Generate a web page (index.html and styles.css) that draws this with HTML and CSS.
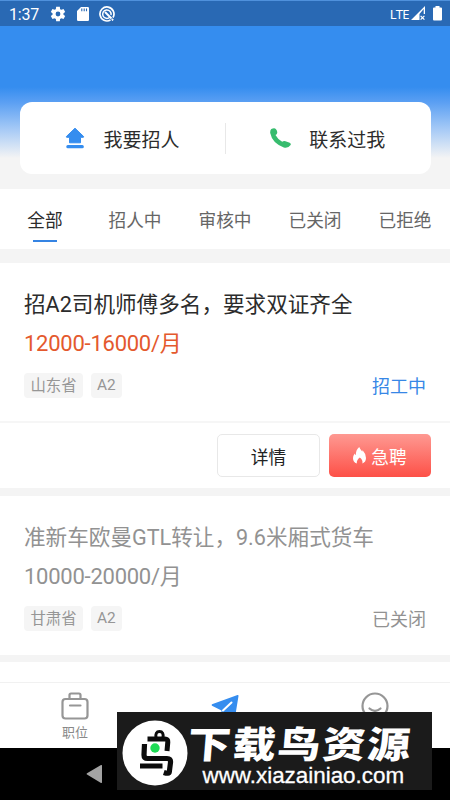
FILE: index.html
```html
<!DOCTYPE html>
<html lang="zh-CN">
<head>
<meta charset="utf-8">
<title>职位管理</title>
<link rel="stylesheet" href="styles.css">
</head>
<body>
<div class="screen">
  <header class="status">
    <span class="clock">1:37</span>
    <svg class="gear" width="16" height="16" viewBox="1 1 22 22"><path fill="#fff" fill-rule="evenodd" d="M19.500 13a8 8 0 0 0 0-2l2.400-1.900-2.300-4-2.900 1.200a8 8 0 0 0-1.800-1L14.500 2h-5L9 5.300a8 8 0 0 0-1.800 1L4.400 5.100l-2.300 4L4.500 11a8 8 0 0 0 0 2l-2.400 1.900 2.300 4 2.800-1.200a8 8 0 0 0 1.800 1l.5 3.300h5l.4-3.300a8 8 0 0 0 1.800-1l2.900 1.200 2.300-4zM12 15.300a3.300 3.300 0 1 1 0-6.600 3.300 3.300 0 0 1 0 6.600z"/></svg>
    <svg class="sd" width="12" height="14" viewBox="0 0 12 14"><path fill="#fff" d="M4 0h6.500A1.300 1.300 0 0 1 12 1.300v11.400a1.300 1.300 0 0 1-1.500 1.300H1.500A1.300 1.300 0 0 1 0 12.700V4z"/><path stroke="#2969b4" stroke-width="1.100" d="M4.800 1.500v2.700M7.200 1.500v2.700M9.500 1.500v2.700"/></svg>
    <svg class="q" width="16" height="16" viewBox="0 0 16 16" fill="none" stroke="#fff"><path stroke-width="1.700" d="M11.500 14A7 7 0 1 1 14 11.500"/><path stroke-width="1.500" d="M10.800 11.200A4.200 4.200 0 1 1 12 9"/><path stroke-width="1.900" d="M6 6l6.500 6.500"/><circle cx="13.500" cy="13.700" r=".7" fill="#fff"/></svg>
    <span class="lte">LTE</span>
    <svg class="signal" width="15" height="15" viewBox="0 0 15 15"><path fill="#fff" fill-rule="evenodd" d="M0 14L14 0v8h-1.300V3L8.500 8V14z"/><path stroke="#fff" stroke-width="1.200" d="M9.600 9.800l3.800 3.800m0-3.800l-3.800 3.800"/></svg>
    <svg class="battery" width="9" height="15" viewBox="0 0 9 15"><path fill="#fff" d="M2.500 1.500V0h4v1.500H8a1 1 0 0 1 1 1V13.500a1 1 0 0 1-1 1H1a1 1 0 0 1-1-1v-11a1 1 0 0 1 1-1z"/></svg>
  </header>
  <section class="hero">
    <div class="actions">
      <div class="action">
        <svg width="20" height="22" viewBox="0 0 20 22"><path fill="#358def" stroke="#358def" stroke-linejoin="round" d="M10 1.200L18.600 9.500q.5.700-.4.800H15.500v5.500H4.500v-5.500H1.800q-.9-.1-.4-.8z"/><rect x="1.300" y="18" width="17.500" height="3.300" rx="1.500" fill="#358def"/></svg>
        <span>我要招人</span>
      </div>
      <div class="action contact">
        <svg width="21" height="20" viewBox="0 0 21 20"><path fill="#37bc6e" d="M1.300 1.100Q4.500-.8 6 1.200q1.500 2 1.200 3.700-.2 1.300-1.700 2.200 2 4 6.700 6.700 1.500-1.300 3.300-.6l4.200 1.500q1.600.8.900 2.200Q18 20.600 13.800 19.400 2.300 15.300.2 5 0 2.400 1.300 1.100z"/></svg>
        <span>联系过我</span>
      </div>
    </div>
  </section>
  <nav class="tabs">
    <a class="active">全部</a><a>招人中</a><a>审核中</a><a>已关闭</a><a>已拒绝</a>
  </nav>
  <main>
    <article class="job">
      <h2>招A2司机师傅多名，要求双证齐全</h2>
      <p class="pay">12000-16000/月</p>
      <div class="meta"><span class="tag">山东省</span><span class="tag small">A2</span><span class="state">招工中</span></div>
      <footer class="buttons">
        <button class="detail">详情</button>
        <button class="urgent"><svg width="13" height="17" viewBox="0 0 13 17"><path fill="#fff" d="M6.200 0q.9 2.200 3 4.600.5-.7.300-1.500Q13 7 13 11q0 4-3.600 5.500.7-3.500-2.600-6-3.300 2.500-3 6Q0 15 0 11.200q0-2.500 1.700-4.800.3 1.200 1.200 1.700Q2.600 3 6.200 0z"/></svg>急聘</button>
      </footer>
    </article>
    <article class="job closed">
      <h2>准新车欧曼GTL转让，9.6米厢式货车</h2>
      <p class="pay">10000-20000/月</p>
      <div class="meta"><span class="tag">甘肃省</span><span class="tag small">A2</span><span class="state">已关闭</span></div>
    </article>
  </main>
  <nav class="bottom">
    <a><svg width="28" height="28" viewBox="0 0 28 28" fill="none" stroke="#969696" stroke-width="2.200"><rect x="1.500" y="7" width="25" height="19.500" rx="3"/><path d="M8.500 7V3q0-1.500 1.500-1.500h8q1.500 0 1.500 1.500v4M9 13.500h10.500" stroke-linecap="round"/></svg><span>职位</span></a>
    <a><svg width="28" height="28" viewBox="0 0 28 28"><path fill="#358def" d="M1 12.200L26.500 3q1.200-.2 1 1L24 25.500l-9.500-5.500-4 5v-6.500L1 13.800q-.8-.7 0-1.600z"/><path stroke="#fff" stroke-width="2" stroke-linecap="round" d="M12 18.500L20.500 10.500"/></svg><span>管理</span></a>
    <a><svg width="28" height="28" viewBox="0 0 28 28" fill="none" stroke="#969696" stroke-width="2.200"><circle cx="14" cy="14" r="12.500"/><path stroke-linecap="round" d="M8.500 16.500q5.500 5 11 0"/></svg><span>我的</span></a>
  </nav>
  <footer class="system"><svg width="17" height="20" viewBox="0 0 17 20"><path fill="#a3a3a3" d="M1 9.200L15 1q1-.4 1 .6v16.700q0 1-1 .6L1 10.600q-1-.7 0-1.400z"/></svg></footer>
  <aside class="banner">
    <svg width="66" height="66" viewBox="0 0 66 66"><circle cx="33" cy="33" r="32.500" fill="#fff"/><g fill="none" stroke="#0c0c0c" stroke-width="5"><path d="M25.500 19H43q3 0 2.800 3l-.8 9"/><path d="M22.500 24l-.5 11q0 3.500 3.500 3.500H45q4 0 3.500 4l-1.200 9.500q-.3 2.200-5.500.500" stroke-width="5.200"/><path d="M18 46h22.500"/><path d="M34 18q-1-6.500 3.500-6.500T41 18" stroke-width="3"/></g><circle cx="33" cy="28" r="4.700" fill="#1edb55"/></svg>
    <div class="brand"><strong>下载鸟资源</strong><span>www.xiazainiao.com</span></div>
  </aside>
</div>
</body>
</html>
```

FILE: styles.css
```css
* { box-sizing: border-box; }
body { margin: 0; font-family: Roboto, "Noto Sans CJK SC", sans-serif; color: #2c2c2c; }
.screen { position: relative; width: 450px; height: 800px; overflow: hidden; background: #fff; display: flex; flex-direction: column; }
.status { height: 26px; flex: none; display: flex; align-items: center; background: #2969b4; border-top: 1px solid #4f91dc; padding: 0 8px 0 9px; color: #fff; }
.clock { width: 41px; font-size: 16px; letter-spacing: -.2px; margin-top: 2px; }
.sd { margin-left: 11px; }
.q { margin-left: 10px; }
.lte { margin-left: auto; font-size: 13px; font-family: "Noto Sans", sans-serif; letter-spacing: -.6px; }
.signal { margin-left: 2px; }
.battery { margin-left: 7px; }
.hero { height: 163px; flex: none; padding: 76px 19px 15px 19.500px; background: linear-gradient(#358def 0, #358def 61px, #5a9ff3 76px, #a8cbf6 104px, #f4f4f4 132px); }
.actions { height: 72px; display: grid; grid-template-columns: 1fr 1fr; align-items: center; background: #fff; border-radius: 12px; }
.action { height: 31px; display: flex; align-items: center; gap: 19px; padding-left: 45px; font-size: 19px; }
.action span { line-height: 30px; margin-top: 5px; }
.contact { border-left: 1px solid #e8e8e8; padding-left: 44px; gap: 18px; }
.tabs { height: 60px; flex: none; display: grid; grid-template-columns: repeat(5, 90px); background: #fff; }
.tabs a { display: flex; flex-direction: column; align-items: center; font-size: 17.700px; line-height: 28px; padding-top: 18px; color: #666; white-space: nowrap; }
.tabs .active { color: #2c2c2c; }
.tabs .active::after { content: ""; width: 24px; height: 2px; margin-top: 5px; background: #3584e3; }
main { height: 433px; flex: none; background: #f4f4f4; padding-top: 14px; }
.job { height: 225px; background: #fff; padding-top: 26px; margin-bottom: 8px; }
h2 { font-size: 21.600px; line-height: 32px; font-weight: 400; margin: 0 0 0 24px; white-space: nowrap; }
.pay { font-size: 22px; line-height: 32px; margin: 7px 0 0 24px; color: #e4592d; letter-spacing: -.25px; }
.meta { display: flex; align-items: center; height: 26px; margin: 12px 24px 0; }
.tag { height: 25px; width: 59px; border-radius: 4px; background: #f5f5f5; color: #969696; font-size: 15.400px; line-height: 27px; text-align: center; }
.small { width: 31.500px; margin-left: 7.500px; line-height: 25px; }
.state { margin-left: auto; font-size: 18px; line-height: 26px; margin-top: 4px; color: #3787e6; }
.buttons { display: flex; justify-content: flex-end; gap: 9px; padding: 11px 19px 0; margin-top: 23px; border-top: 2px solid #f6f6f6; }
button { height: 43px; width: 102px; display: flex; align-items: center; justify-content: center; gap: 5px; border-radius: 5px; font: 17.700px Roboto, "Noto Sans CJK SC", sans-serif; padding: 0; }
.detail { width: 103px; background: #fff; border: 1px solid #e8e8e8; color: #222; }
.urgent { border: 0; color: #fff; background: linear-gradient(#fe9992, #fd5047); }
.closed { height: 159px; margin: 0; color: #929292; }
.closed .pay, .closed .state { color: #929292; }
.bottom { height: 66px; flex: none; display: grid; grid-template-columns: repeat(3, 150px); background: #fff; border-top: 1px solid #f1f1f1; }
main::after { content: ""; display: block; height: 20px; margin-top: 7px; background: #fff; }
.bottom a { display: flex; flex-direction: column; align-items: center; padding-top: 9px; color: #888; font-size: 13px; line-height: 20px; }
.bottom span { margin-top: 3px; }
.system { height: 52px; background: #000; padding: 16px 0 0 86px; }
.system svg { display: block; }
.banner { position: absolute; left: 117px; top: 712px; width: 315px; height: 78px; display: flex; background: #1b1b1b; color: #fff; padding-left: 4.500px; }
.banner > svg { margin-top: 7.500px; flex: none; }
.brand { display: flex; flex-direction: column; margin-left: 0; }
.brand strong { font-family: "Noto Sans CJK SC", sans-serif; font-weight: 900; font-size: 43px; line-height: 48px; height: 50px; margin-top: 6px; margin-bottom: -4px; white-space: nowrap; transform: scaleY(.86) skewX(-4deg); transform-origin: 0 50%; letter-spacing: 1.900px; }
.brand span { margin-left: 15px; font-family: "Liberation Sans", sans-serif; font-size: 22.400px; line-height: 23px; -webkit-text-stroke: .3px #fff; }
```
